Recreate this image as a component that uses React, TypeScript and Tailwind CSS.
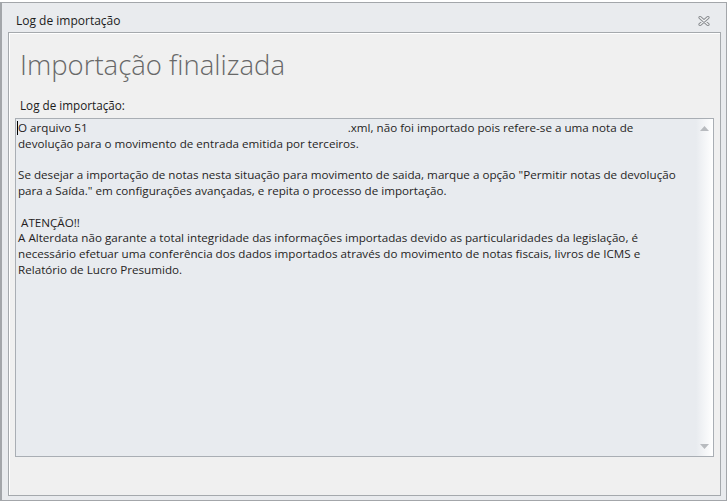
import React from 'react';

const lines: string[] = [
  'devolução para o movimento de entrada emitida por terceiros.',
  '',
  'Se desejar a importação de notas nesta situação para movimento de saida, marque a opção "Permitir notas de devolução',
  'para a Saída." em configurações avançadas, e repita o processo de importação.',
  '',
  ' ATENÇÃO!!',
  'A Alterdata não garante a total integridade das informações importadas devido as particularidades da legislação, é',
  'necessário efetuar uma conferência dos dados importados através do movimento de notas fiscais, livros de ICMS e',
  'Relatório de Lucro Presumido.'
];

function CloseGlyph() {
  return (
    <svg width="12" height="10" viewBox="0 0 12 10">
      <path d="M2 1.5 L10 8.5 M10 1.5 L2 8.5" stroke="#8a8d91" strokeWidth="3.2" strokeLinecap="round" />
      <path d="M2 1.5 L10 8.5 M10 1.5 L2 8.5" stroke="#f4f5f6" strokeWidth="1.2" strokeLinecap="round" />
    </svg>
  );
}

function TriangleUp() {
  return (
    <svg width="9" height="5" viewBox="0 0 9 5">
      <path d="M0 5 L4.5 0 L9 5 Z" fill="#b8bbbf" />
    </svg>
  );
}

function TriangleDown() {
  return (
    <svg width="9" height="5" viewBox="0 0 9 5">
      <path d="M0 0 L4.5 5 L9 0 Z" fill="#b8bbbf" />
    </svg>
  );
}

export default function App() {
  return (
    <div className="w-[727px] h-[501px] bg-white pt-[2px] font-['Open_Sans',sans-serif]">
      <div className="h-[499px] flex flex-col bg-[#e9ebee] border-t border-l-2 border-r border-b border-[#a3a6aa]">
        {/* title bar */}
        <div className="h-[29px] flex items-center justify-between pl-[14px] pr-[16px] pt-[6px]">
          <span className="text-[12px] text-[#1b1b1b]">Log de importação</span>
          <CloseGlyph />
        </div>

        {/* content panel */}
        <div className="flex-1 ml-[6px] mr-[5px] mb-[4px] bg-[#f0f0f0] border border-[#a5a9ad] shadow-[inset_1px_1px_0_#ffffff] flex flex-col">
          <h1 className="pl-[11px] pt-[18px] h-[64px] text-[27.5px] font-light text-[#686868] leading-none">
            Importação finalizada
          </h1>
          <div className="pl-[11px] h-[21px] text-[11.7px] text-[#1b1b1b] leading-[16px]">Log de importação:</div>

          <div className="mx-[6px] h-[339px] bg-[#e8ebef] border border-[#a9aeb4] flex">
            <div className="flex-1 pl-[1px] pt-[1px] text-[11.65px] leading-[15.75px] text-[#261e1e] whitespace-pre">
              <div className="flex items-center h-[15.75px]">
                <span className="w-px h-[14px] bg-black" />
                <span>O arquivo 51</span>
                <span className="w-[260px]" />
                <span>.xml, não foi importado pois refere-se a uma nota de</span>
              </div>
              {lines.map((line, i) => (
                <div key={i} className="h-[15.75px] pl-px">
                  {line}
                </div>
              ))}
            </div>
            <div className="w-[17px] flex flex-col items-center justify-between py-[7px] bg-gradient-to-r from-[#e8ebef] to-white">
              <TriangleUp />
              <TriangleDown />
            </div>
          </div>
        </div>
      </div>
    </div>
  );
}
